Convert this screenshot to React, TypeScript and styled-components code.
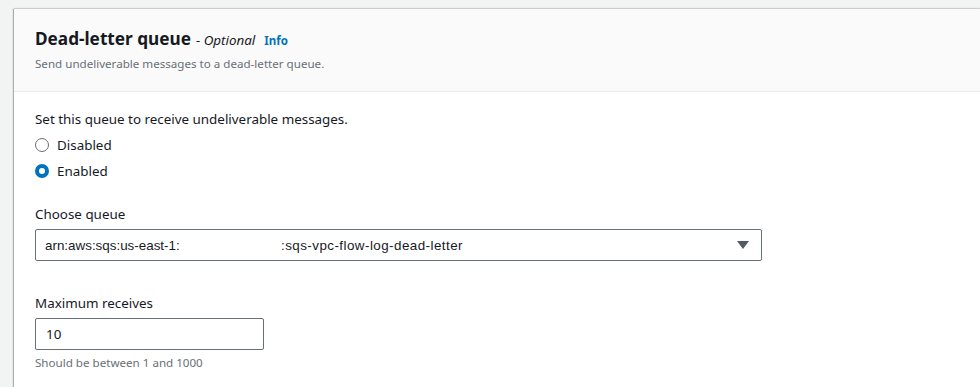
import React, { useState } from 'react';
import styled, { createGlobalStyle } from 'styled-components';

const GlobalStyle = createGlobalStyle`
  html, body {
    margin: 0;
    padding: 0;
    background: #f2f3f3;
    font-family: 'Noto Sans', 'Open Sans', sans-serif;
    color: #16191f;
    overflow: hidden;
  }
`;

const Page = styled.div`
  padding: 9px 0 0 14px;
  height: 387px;
  box-sizing: border-box;
`;

const Card = styled.section`
  background: #ffffff;
  box-shadow: -1px 0 1px rgba(0, 28, 36, 0.3), 0 -1px 1px rgba(0, 28, 36, 0.12);
  height: 100%;
`;

const Header = styled.div`
  background: #fafafa;
  border-bottom: 1px solid #eaeded;
  padding: 17px 20px 0 21px;
  height: 83px;
  box-sizing: border-box;
`;

const TitleRow = styled.div`
  display: flex;
  align-items: baseline;
`;

const Title = styled.h2`
  margin: 0;
  font-size: 17.2px;
  font-weight: 700;
  line-height: 26px;
  color: #16191f;
`;

const Optional = styled.span`
  font-size: 13.4px;
  font-style: italic;
  margin-left: 5px;
  color: #16191f;
`;

const InfoLink = styled.a`
  font-size: 11.5px;
  font-weight: 700;
  color: #0073bb;
  margin-left: 9px;
  text-decoration: none;
`;

const Description = styled.p`
  margin: 4px 0 0;
  font-size: 11.6px;
  line-height: 16px;
  color: #687078;
`;

const Body = styled.div`
  padding: 18px 21px;
  display: flex;
  flex-direction: column;
`;

const Legend = styled.div`
  font-size: 13.4px;
  line-height: 18px;
  margin-bottom: 4px;
`;

const RadioRow = styled.label`
  display: flex;
  align-items: center;
  gap: 8px;
  font-size: 13.4px;
  line-height: 18px;
  height: 26px;
  cursor: pointer;
`;

const RadioDot = styled.span<{ $checked: boolean }>`
  width: 14px;
  height: 14px;
  box-sizing: border-box;
  border-radius: 50%;
  border: ${(p) => (p.$checked ? '4px solid #0073bb' : '1.5px solid #687078')};
  background: #fff;
`;

const Field = styled.div<{ $top: number }>`
  margin-top: ${(p) => p.$top}px;
  display: flex;
  flex-direction: column;
`;

const Label = styled.div`
  font-size: 13.4px;
  line-height: 18px;
  margin-bottom: 6px;
`;

const Select = styled.div`
  width: 727px;
  height: 32px;
  box-sizing: border-box;
  border: 1px solid #687078;
  border-radius: 2px;
  display: flex;
  align-items: center;
  padding: 0 12px 0 9px;
  font-family: 'Liberation Sans', Arial, sans-serif;
  font-size: 13.4px;
  color: #16191f;
`;

const ArnPart = styled.span<{ $width?: number; $spacing?: number }>`
  display: inline-block;
  width: ${(p) => (p.$width ? `${p.$width}px` : 'auto')};
  letter-spacing: ${(p) => p.$spacing ?? 0}px;
  white-space: nowrap;
`;

const Caret = styled.span`
  margin-left: auto;
  width: 0;
  height: 0;
  border-left: 6px solid transparent;
  border-right: 6px solid transparent;
  border-top: 8px solid #545b64;
`;

const NumberInput = styled.input`
  width: 229px;
  height: 32px;
  box-sizing: border-box;
  border: 1px solid #687078;
  border-radius: 2px;
  padding: 0 10px;
  font-family: 'Noto Sans', 'Open Sans', sans-serif;
  font-size: 13.4px;
  color: #16191f;
  outline: none;
`;

const Hint = styled.div`
  margin-top: 5px;
  font-size: 11.6px;
  line-height: 16px;
  color: #687078;
`;

export default function App() {
  const [mode, setMode] = useState<'disabled' | 'enabled'>('enabled');
  const [maxReceives, setMaxReceives] = useState('10');

  return (
    <>
      <GlobalStyle />
      <Page>
        <Card>
          <Header>
            <TitleRow>
              <Title>Dead-letter queue</Title>
              <Optional>- Optional</Optional>
              <InfoLink href="#">Info</InfoLink>
            </TitleRow>
            <Description>Send undeliverable messages to a dead-letter queue.</Description>
          </Header>
          <Body>
            <Legend>Set this queue to receive undeliverable messages.</Legend>
            <RadioRow onClick={() => setMode('disabled')}>
              <RadioDot $checked={mode === 'disabled'} />
              Disabled
            </RadioRow>
            <RadioRow onClick={() => setMode('enabled')}>
              <RadioDot $checked={mode === 'enabled'} />
              Enabled
            </RadioRow>

            <Field $top={21}>
              <Label>Choose queue</Label>
              <Select>
                <ArnPart $width={236}>arn:aws:sqs:us-east-1:</ArnPart>
                <ArnPart $spacing={0.45}>:sqs-vpc-flow-log-dead-letter</ArnPart>
                <Caret />
              </Select>
            </Field>

            <Field $top={33}>
              <Label>Maximum receives</Label>
              <NumberInput value={maxReceives} onChange={(e) => setMaxReceives(e.target.value)} />
              <Hint>Should be between 1 and 1000</Hint>
            </Field>
          </Body>
        </Card>
      </Page>
    </>
  );
}
